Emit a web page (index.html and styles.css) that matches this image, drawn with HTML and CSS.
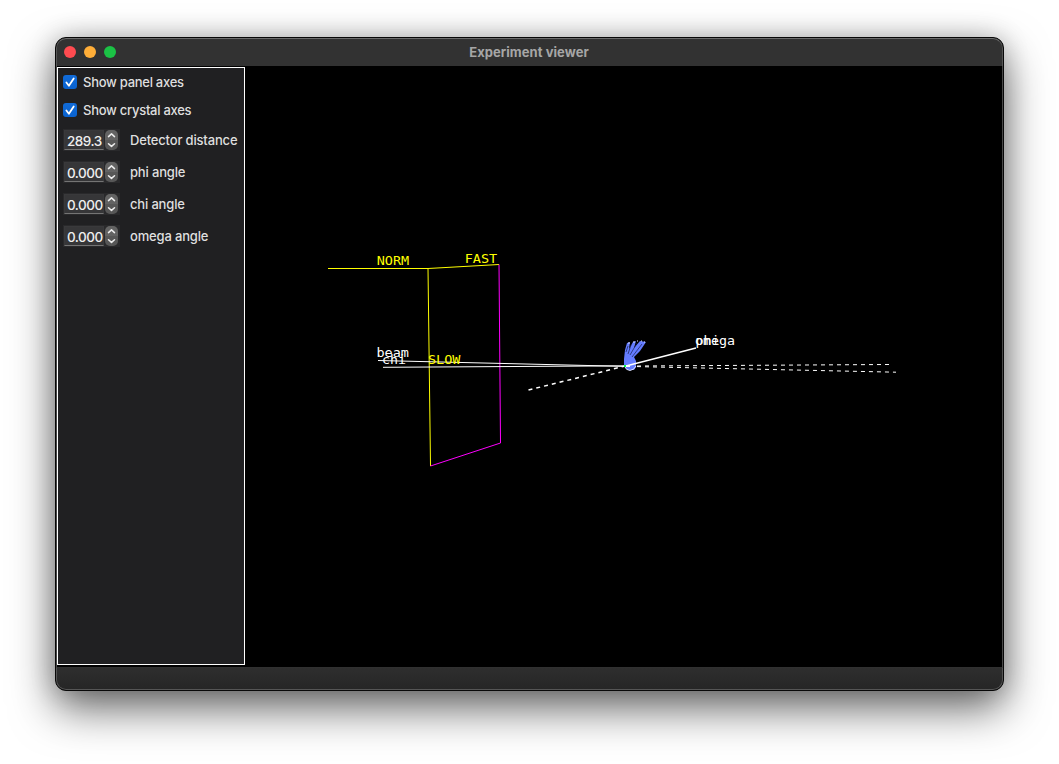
FILE: index.html
```html
<!DOCTYPE html>
<html lang="en">
<head>
<meta charset="utf-8">
<title>Experiment viewer</title>
<link rel="stylesheet" href="styles.css">
</head>
<body>
<main class="window">
  <header class="titlebar">
    <div class="lights"><i class="light close"></i><i class="light minimise"></i><i class="light expand"></i></div>
    <h1 class="title">Experiment viewer</h1>
  </header>
  <div class="content">
    <aside class="sidebar">
      <div class="check"><svg class="box" viewBox="0 0 14 14"><path d="M3.4 7.5 5.9 10.7 10.7 3.4"/></svg><span class="check-label">Show panel axes</span></div>
      <div class="check"><svg class="box" viewBox="0 0 14 14"><path d="M3.4 7.5 5.9 10.7 10.7 3.4"/></svg><span class="check-label">Show crystal axes</span></div>
      <div class="control"><div class="spin"><span class="value">289.3</span><svg class="stepper" viewBox="0 0 13 20"><path d="M3.5 6.6 6.5 3.9 9.5 6.6M3.5 13.7 6.5 16.4 9.5 13.7"/></svg></div><span class="name">Detector distance</span></div>
      <div class="control"><div class="spin"><span class="value">0.000</span><svg class="stepper" viewBox="0 0 13 20"><path d="M3.5 6.6 6.5 3.9 9.5 6.6M3.5 13.7 6.5 16.4 9.5 13.7"/></svg></div><span class="name">phi angle</span></div>
      <div class="control"><div class="spin"><span class="value">0.000</span><svg class="stepper" viewBox="0 0 13 20"><path d="M3.5 6.6 6.5 3.9 9.5 6.6M3.5 13.7 6.5 16.4 9.5 13.7"/></svg></div><span class="name">chi angle</span></div>
      <div class="control"><div class="spin"><span class="value">0.000</span><svg class="stepper" viewBox="0 0 13 20"><path d="M3.5 6.6 6.5 3.9 9.5 6.6M3.5 13.7 6.5 16.4 9.5 13.7"/></svg></div><span class="name">omega angle</span></div>
    </aside>
    <svg class="scene" viewBox="245 66 757 601">
      <g class="panel-axes">
        <path d="M328 268.5H428L499 264.5M428 268.5 430.5 466"/>
      </g>
      <path class="panel-edge" d="M499 264.5 500.5 443 430.5 466"/>
      <g class="crystal">
        <path class="crystal-body" d="M624 359 625 350 627 343 630 342 629 349 633 342 636 341 634 348 640 341 646 342 640 351 634 357 636 361V367L634 370H627L624 366Z"/>
        <path class="crystal-gaps" d="M628 354 631 345M630 355 637 343M632 357 642 344M626 352 628 346"/>
        <path class="crystal-tips" d="M628 343h2M633 342h2M637 341h1M641 341h1M644 342h1"/>
        <path class="crystal-base" d="M625 367Q626 370 630 370.5Q634 370 636 366"/>
      </g>
      <g class="beams">
        <path d="M378 360.5 630 366.5M383 367.3 630 365.8"/>
        <path class="near-axis" d="M626 366 696 348"/>
        <path class="dashed" d="M637 366 889 364.5M637 366.6 896 372.2"/>
        <path class="dashed near-axis" d="M528.5 390 624 366.3"/>
      </g>
      <path class="origin" d="M624 366h2"/>
      <g class="axis-labels yellow">
        <text x="376.7" y="265" textLength="32.5" lengthAdjust="spacingAndGlyphs">NORM</text>
        <text x="464.7" y="263" textLength="32.5" lengthAdjust="spacingAndGlyphs">FAST</text>
        <text x="428" y="364" textLength="32.5" lengthAdjust="spacingAndGlyphs">SLOW</text>
      </g>
      <g class="axis-labels">
        <text x="376.5" y="357" textLength="32.5" lengthAdjust="spacingAndGlyphs">beam</text>
        <text x="382" y="364" textLength="24" lengthAdjust="spacingAndGlyphs">chi</text>
        <text x="695" y="344.5" textLength="40" lengthAdjust="spacingAndGlyphs">omega</text>
        <text x="695.5" y="344.5" textLength="24" lengthAdjust="spacingAndGlyphs">phi</text>
      </g>
    </svg>
  </div>
  <footer class="statusbar"></footer>
</main>
</body>
</html>
```
FILE: styles.css
```css
* { box-sizing: border-box; }
html, body { width: 100%; height: 100%; }
body {
  margin: 0;
  padding: 37px 55px;
  overflow: hidden;
  background: #fff;
  font: 500 13px/16px Inter, "Liberation Sans", sans-serif;
  color: #dfdfdf;
}
.window {
  display: flex;
  flex-direction: column;
  width: 949px;
  height: 654px;
  border: 1px solid #080808;
  border-radius: 11px;
  overflow: hidden;
  background: #2a2a2a;
  box-shadow: 0 18px 44px rgba(0, 0, 0, .58), 0 0 26px rgba(0, 0, 0, .2);
}
.titlebar {
  display: grid;
  grid-template-columns: 100px 1fr 100px;
  align-items: center;
  height: 28px;
  padding-bottom: 2px;
  border: 1px solid #555;
  border-top-color: #6c6c6c;
  border-bottom: 0;
  border-radius: 10px 10px 0 0;
  background: #323232;
}
.lights { display: flex; gap: 8px; padding-left: 7px; }
.light { width: 12px; height: 12px; border-radius: 50%; }
.close { background: #ff4b50; }
.minimise { background: #ffae38; }
.expand { background: #1bc245; }
.title { margin: 0; padding-right: 1px; font-size: 13px; font-weight: 700; line-height: 16px; text-align: center; color: #a6a6a6; letter-spacing: .06px; }
.content {
  display: flex;
  height: 601px;
  border: solid #484848;
  border-width: 0 1px;
  background: #000;
}
.sidebar {
  flex: none;
  width: 188px;
  height: 598px;
  margin-top: 1px;
  padding: 7px 5px;
  border: 1px solid #fff;
  background: #202022;
}
.check { display: flex; align-items: center; gap: 6px; height: 14px; margin-bottom: 14px; white-space: nowrap; }
.box { width: 14px; height: 14px; border-radius: 3px; background: linear-gradient(#116bd8, #0962cf); }
.box path { fill: none; stroke: #fff; stroke-width: 1.8; stroke-linecap: round; stroke-linejoin: round; }
.check-label { letter-spacing: -.27px; }
.control { display: flex; align-items: center; height: 22px; margin-bottom: 10px; white-space: nowrap; }
.check + .control { margin-top: -2px; }
.spin { display: flex; flex: none; align-items: center; gap: 1px; width: 57px; height: 22px; padding-left: 1px; background: #29292b; }
.value { flex: none; width: 40px; height: 20px; padding-left: 2px; border: 1px solid #39393b; border-bottom-color: #747474; background: #363638; font-size: 13.5px; line-height: 20px; letter-spacing: -.5px; color: #eee; }
.stepper { width: 13px; height: 20px; border-radius: 5px; background: linear-gradient(#636363 50%, #575757 50%); }
.stepper path { fill: none; stroke: #eee; stroke-width: 1.5; stroke-linecap: round; stroke-linejoin: round; }
.name { margin-left: 10px; letter-spacing: -.17px; }
.scene { flex: none; width: 757px; height: 601px; background: #000; }
.panel-axes { fill: none; stroke: #ff0; stroke-width: 1; }
.panel-edge { fill: none; stroke: #f0f; stroke-width: 1; }
.beams { fill: none; stroke: #fff; stroke-width: 1; }
.near-axis { stroke-width: 1.5; }
.dashed { stroke-dasharray: 4 4; }
.crystal-body { fill: #647cff; }
.crystal-gaps { fill: none; stroke: #17204d; stroke-width: .7; }
.crystal-tips, .crystal-base { fill: none; stroke: #dce2ff; stroke-width: 1; }
.origin { stroke: #00ff50; stroke-width: 2; }
.axis-labels { fill: #fff; font: 400 12px "DejaVu Sans Mono", monospace; }
.yellow { fill: #ff0; }
.statusbar {
  height: 23px;
  border: 1px solid #555;
  border-top-color: #303030;
  border-radius: 0 0 10px 10px;
  background: linear-gradient(#2e2e2e, #262626);
}
```
